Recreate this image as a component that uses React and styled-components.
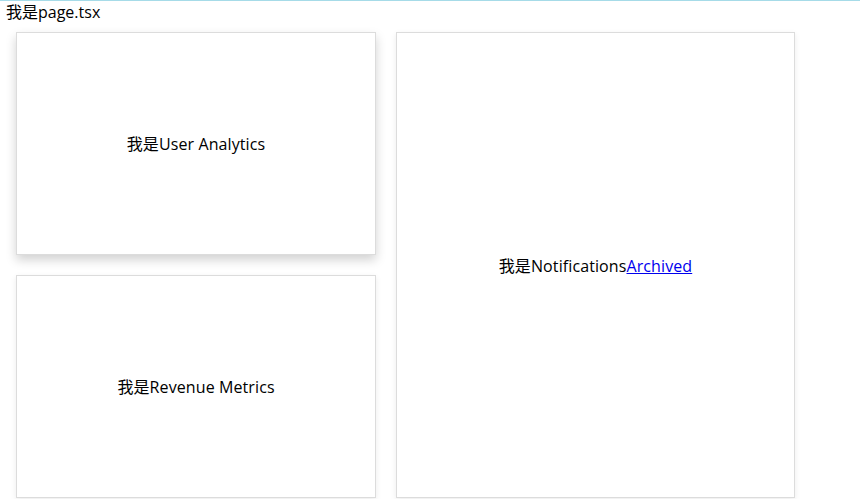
import React from 'react';
import styled, { createGlobalStyle } from 'styled-components';

const GlobalStyle = createGlobalStyle`
  html, body {
    margin: 0;
    padding: 0;
    background: #fff;
  }
  body {
    font-family: "Open Sans", "Noto Sans CJK SC", sans-serif;
    font-size: 16px;
    color: #000;
  }
`;

const Page = styled.div`
  border-top: 1px solid #a6dbe8;
  min-height: 498px;
`;

const Title = styled.div`
  padding-left: 6px;
  line-height: 22px;
  height: 22px;
`;

const Grid = styled.div`
  display: grid;
  grid-template-columns: 360px 399px;
  grid-template-rows: 223px 223px;
  gap: 20px;
  margin: 9px 0 0 16px;
`;

const Card = styled.div`
  box-sizing: border-box;
  border: 1px solid #dcdcdc;
  background: #fff;
  display: flex;
  align-items: center;
  justify-content: center;
  grid-column: ${(p) => (p.$col ? p.$col : 'auto')};
  grid-row: ${(p) => (p.$tall ? '1 / span 2' : 'auto')};
  box-shadow: ${(p) =>
    p.$raised
      ? '0 5px 10px rgba(0, 0, 0, 0.18)'
      : '0 2px 6px rgba(0, 0, 0, 0.08)'};
`;

const Label = styled.span`
  font-size: 16px;
  line-height: 22px;
  padding-top: 1px;
  letter-spacing: 0.1px;
`;

const Link = styled.a`
  color: #0000ee;
  text-decoration: underline;
`;

export default function App() {
  return (
    <Page>
      <GlobalStyle />
      <Title>我是page.tsx</Title>
      <Grid>
        <Card $raised $col="1">
          <Label>我是User Analytics</Label>
        </Card>
        <Card $tall $col="2">
          <Label>
            我是Notifications<Link href="#">Archived</Link>
          </Label>
        </Card>
        <Card $col="1">
          <Label>我是Revenue Metrics</Label>
        </Card>
      </Grid>
    </Page>
  );
}
